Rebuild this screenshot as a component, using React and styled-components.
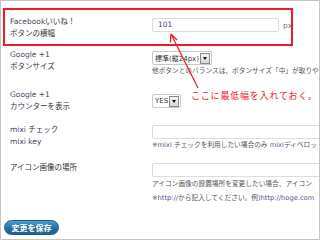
import React from "react";
import styled, { createGlobalStyle } from "styled-components";

const Global = createGlobalStyle`
  html, body {
    margin: 0;
    padding: 0;
    background: #fff;
  }
  body {
    font-family: "DejaVu Sans", "Noto Sans CJK JP", sans-serif;
  }
`;

const Frame = styled.div`
  position: relative;
  box-sizing: border-box;
  width: 320px;
  height: 240px;
  border: 1px solid #c4c4c4;
  overflow: hidden;
  background: #fff;
`;

const Highlight = styled.div`
  display: flex;
  box-sizing: border-box;
  width: 290px;
  height: 38px;
  margin: 7px 0 0 2px;
  padding-left: 5px;
  border: 2px solid #ee1c25;
`;

const Row = styled.div`
  display: flex;
  box-sizing: border-box;
  height: ${(p) => p.$h}px;
  padding-left: 9px;
`;

const Label = styled.div`
  width: 142px;
  flex-shrink: 0;
  padding-top: ${(p) => p.$top ?? 3}px;
  font-size: 7.5px;
  line-height: 12px;
  color: #333;
  white-space: nowrap;
`;

const Latin = styled.span`
  color: #4e3f63;
`;

const Field = styled.div`
  display: flex;
  flex-direction: column;
  align-items: flex-start;
  padding-top: ${(p) => p.$top}px;
  min-width: 0;
`;

const InputLine = styled.div`
  display: flex;
  align-items: center;
  gap: 4px;
`;

const TextInput = styled.div`
  box-sizing: border-box;
  width: ${(p) => p.$w}px;
  height: ${(p) => p.$h ?? 14}px;
  padding-left: 5px;
  border: 1px solid #dcdcdc;
  border-radius: 2px;
  background: #fff;
  font-size: 7.5px;
  line-height: 12px;
  color: #4e3f63;
`;

const Unit = styled.span`
  font-size: 7.5px;
  color: #777;
`;

const Select = styled.div`
  display: flex;
  align-items: center;
  box-sizing: border-box;
  height: 14px;
  padding: 0 1px 0 2px;
  border: 1px solid #c8c8c8;
  border-radius: 2px;
  background: #fff;
  font-size: 7px;
  color: #333;
  white-space: nowrap;
`;

const Arrow = styled.span`
  display: flex;
  align-items: center;
  justify-content: center;
  box-sizing: border-box;
  width: 10px;
  height: 11px;
  margin-left: 1px;
  border: 1px solid #8a8a8a;
  background: linear-gradient(#f4f4f4, #d8d8d8);

  &::after {
    content: "";
    border-left: 2.5px solid transparent;
    border-right: 2.5px solid transparent;
    border-top: 3px solid #111;
  }
`;

const Note = styled.div`
  font-size: 6.7px;
  line-height: ${(p) => p.$lh ?? 12}px;
  color: #555;
  white-space: nowrap;
`;

const Link = styled.span`
  color: #5a4c90;
`;

const SaveButton = styled.button`
  display: block;
  box-sizing: border-box;
  width: 55px;
  height: 15px;
  margin: 11px 0 0 3px;
  padding: 0;
  border: 1px solid #1d5a86;
  border-radius: 8px;
  background: linear-gradient(#4a9bd0, #236f9f 60%, #1c6290);
  font-family: "Noto Sans CJK JP", sans-serif;
  font-size: 8px;
  font-weight: bold;
  color: #fff;
  line-height: 13px;
`;

const Callout = styled.div`
  position: absolute;
  left: 190px;
  top: 88px;
  font-family: "Noto Sans CJK JP", sans-serif;
  font-size: 9px;
  letter-spacing: 0.8px;
  color: #e8202a;
  white-space: nowrap;
`;

const ArrowSvg = styled.svg`
  position: absolute;
  left: 0;
  top: 0;
  pointer-events: none;
`;

export default function App() {
  return (
    <>
      <Global />
      <Frame>
        <Highlight>
          <Label $top={6}>
            <Latin>Facebook</Latin>いいね！
            <br />
            ボタンの横幅
          </Label>
          <Field $top={8}>
            <InputLine>
              <TextInput $w={127}>101</TextInput>
              <Unit>px</Unit>
            </InputLine>
          </Field>
        </Highlight>

        <Row $h={40}>
          <Label>
            <Latin>Google +1</Latin>
            <br />
            ボタンサイズ
          </Label>
          <Field $top={5}>
            <Select>
              標準(縦24px)
              <Arrow />
            </Select>
            <Note>他ボタンとのバランスは、ボタンサイズ「中」が取りや</Note>
          </Field>
        </Row>

        <Row $h={35}>
          <Label>
            <Latin>Google +1</Latin>
            <br />
            カウンターを表示
          </Label>
          <Field $top={8}>
            <Select>
              YES
              <Arrow />
            </Select>
          </Field>
        </Row>

        <Row $h={38}>
          <Label>
            <Latin>mixi</Latin> チェック
            <br />
            <Latin>mixi key</Latin>
          </Label>
          <Field $top={4}>
            <TextInput $w={200} $h={14} />
            <Note>
              ※<Link>mixi</Link> チェックを利用したい場合のみ <Link>mixi</Link>ディベロッ
            </Note>
          </Field>
        </Row>

        <Row $h={50}>
          <Label>アイコン画像の場所</Label>
          <Field $top={4}>
            <TextInput $w={200} $h={14} />
            <Note $lh={14}>アイコン画像の設置場所を変更したい場合、アイコン</Note>
            <Note $lh={14}>
              ※<Link>http://</Link>から記入してください。例)<Link>http://hoge.com</Link>
            </Note>
          </Field>
        </Row>

        <SaveButton>変更を保存</SaveButton>

        <ArrowSvg width="320" height="240" viewBox="0 0 320 240">
          <line x1="197" y1="87" x2="171" y2="35" stroke="#e51d24" strokeWidth="1.3" />
          <path d="M170 33 L169.5 41.5 M170 33 L176 39" stroke="#e51d24" strokeWidth="1.4" fill="none" />
        </ArrowSvg>
        <Callout>ここに最低幅を入れておく。</Callout>
      </Frame>
    </>
  );
}
